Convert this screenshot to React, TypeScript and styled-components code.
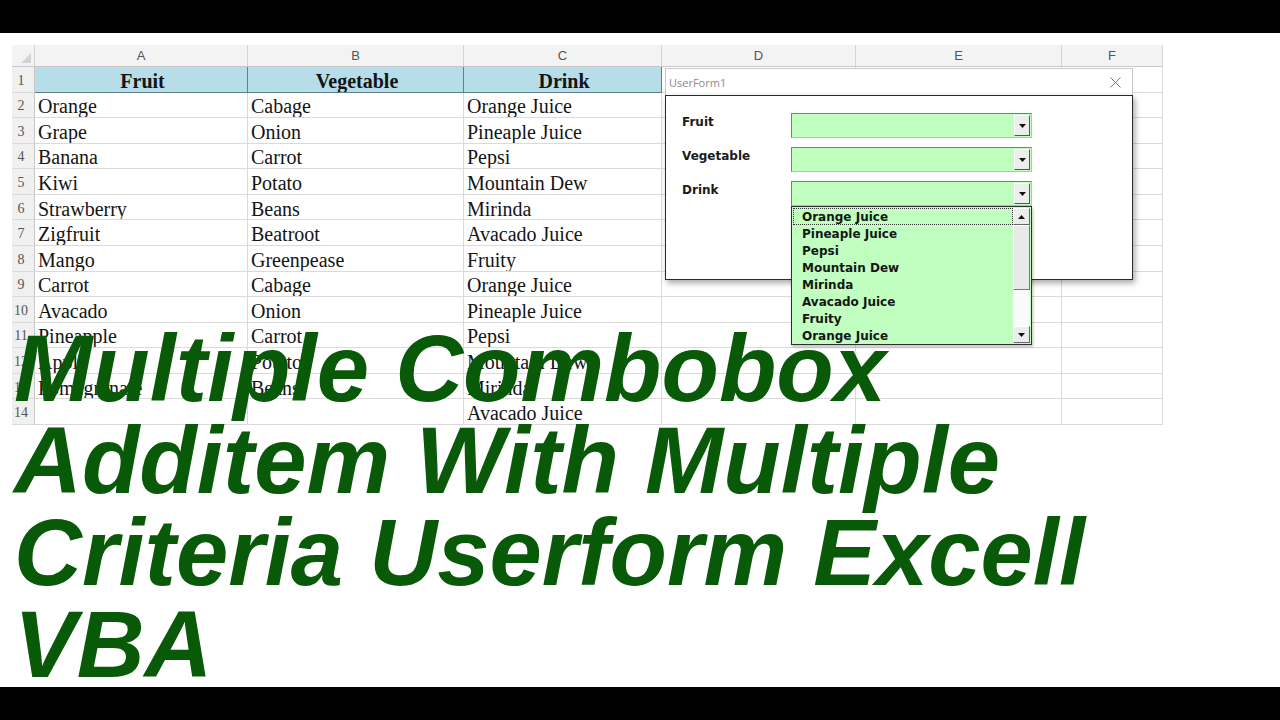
import React from 'react'
import styled, { createGlobalStyle } from 'styled-components'

const GlobalStyle = createGlobalStyle`
  html, body {
    margin: 0;
    padding: 0;
    background: #000;
  }
  body {
    width: 1280px;
    height: 720px;
    overflow: hidden;
  }
  * {
    box-sizing: border-box;
  }
`

const columns = [
  { label: 'A', width: 213 },
  { label: 'B', width: 216 },
  { label: 'C', width: 198 },
  { label: 'D', width: 194 },
  { label: 'E', width: 206 },
  { label: 'F', width: 101 },
]

const rows: string[][] = [
  ['Fruit', 'Vegetable', 'Drink'],
  ['Orange', 'Cabage', 'Orange Juice'],
  ['Grape', 'Onion', 'Pineaple Juice'],
  ['Banana', 'Carrot', 'Pepsi'],
  ['Kiwi', 'Potato', 'Mountain Dew'],
  ['Strawberry', 'Beans', 'Mirinda'],
  ['Zigfruit', 'Beatroot', 'Avacado Juice'],
  ['Mango', 'Greenpease', 'Fruity'],
  ['Carrot', 'Cabage', 'Orange Juice'],
  ['Avacado', 'Onion', 'Pineaple Juice'],
  ['Pineapple', 'Carrot', 'Pepsi'],
  ['Apple', 'Potato', 'Mountain Dew'],
  ['Pomegranate', 'Beans', 'Mirinda'],
  ['', '', 'Avacado Juice'],
]

const drinks = [
  'Orange Juice',
  'Pineaple Juice',
  'Pepsi',
  'Mountain Dew',
  'Mirinda',
  'Avacado Juice',
  'Fruity',
  'Orange Juice',
]

const fields = ['Fruit', 'Vegetable', 'Drink']

const Arrow = ({ up }: { up?: boolean }) => (
  <svg width="7" height="4" viewBox="0 0 7 4">
    <polygon points={up ? '0,4 7,4 3.5,0' : '0,0 7,0 3.5,4'} fill="#111" />
  </svg>
)

export default function App() {
  return (
    <>
      <GlobalStyle />
      <Page>
        <Letterbox />
        <Screen>
          <Sheet>
            <Corner />
            {columns.map((c) => (
              <ColHead key={c.label}>{c.label}</ColHead>
            ))}
            {rows.map((row, r) => (
              <React.Fragment key={r}>
                <RowHead>{r + 1}</RowHead>
                {columns.map((c, i) => (
                  <Cell key={c.label} $header={r === 0 && i < 3}>
                    {row[i] || ''}
                  </Cell>
                ))}
              </React.Fragment>
            ))}
          </Sheet>

          <Window>
            <TitleBar>
              <Caption>UserForm1</Caption>
              <svg width="11" height="11" viewBox="0 0 11 11">
                <path d="M0.5 0.5 L10.5 10.5 M10.5 0.5 L0.5 10.5" stroke="#7a7a7a" strokeWidth="1" />
              </svg>
            </TitleBar>
            <FormBody>
              {fields.map((f) => (
                <FieldRow key={f}>
                  <FieldLabel>{f}</FieldLabel>
                  <ComboWrap>
                    <Combo>
                      <ComboButton>
                        <Arrow />
                      </ComboButton>
                    </Combo>
                    {f === 'Drink' && (
                      <DropList>
                        <Items>
                          {drinks.map((d, i) => (
                            <Item key={i} $focused={i === 0}>
                              {d}
                            </Item>
                          ))}
                        </Items>
                        <ScrollBar>
                          <ScrollButton>
                            <Arrow up />
                          </ScrollButton>
                          <Thumb />
                          <Track />
                          <ScrollButton>
                            <Arrow />
                          </ScrollButton>
                        </ScrollBar>
                      </DropList>
                    )}
                  </ComboWrap>
                </FieldRow>
              ))}
            </FormBody>
          </Window>

          <Headline>
            <HeadLine>Multiple Combobox</HeadLine>
            <HeadLine>Additem With Multiple</HeadLine>
            <HeadLine>Criteria Userform Excell</HeadLine>
            <HeadLine>VBA</HeadLine>
          </Headline>
        </Screen>
        <Letterbox />
      </Page>
    </>
  )
}

const Page = styled.div`
  width: 1280px;
  height: 720px;
  display: flex;
  flex-direction: column;
  background: #000;
`

const Letterbox = styled.div`
  height: 33px;
  flex: none;
  background: #000;
`

const Screen = styled.div`
  position: relative;
  flex: 1;
  background: #fff;
  padding: 12px 0 0 12px;
  overflow: hidden;
`

const Sheet = styled.div`
  display: grid;
  grid-template-columns: 23px ${columns.map((c) => `${c.width}px`).join(' ')};
  grid-template-rows: 22px repeat(14, 25.57px);
  width: 1151px;
  background: #fff;
`

const Corner = styled.div`
  position: relative;
  background: #f3f3f3;
  border-right: 1px solid #d0d0d0;
  border-bottom: 1px solid #c8c8c8;

  &::after {
    content: '';
    position: absolute;
    right: 3px;
    bottom: 3px;
    border-left: 10px solid transparent;
    border-bottom: 10px solid #d2d2d2;
  }
`

const ColHead = styled.div`
  display: flex;
  align-items: center;
  justify-content: center;
  background: #f3f3f3;
  border-right: 1px solid #d4d4d4;
  border-bottom: 1px solid #c8c8c8;
  font-family: 'Liberation Sans', Arial, sans-serif;
  font-size: 13px;
  color: #555;
`

const RowHead = styled.div`
  display: flex;
  align-items: center;
  justify-content: center;
  padding: 3px 4px 0 0;
  background: #f0f0f0;
  border-right: 1px solid #c8c8c8;
  border-bottom: 1px solid #dadada;
  font-family: 'Liberation Serif', 'Times New Roman', serif;
  font-size: 14px;
  color: #555;
`

const Cell = styled.div<{ $header?: boolean }>`
  display: flex;
  align-items: center;
  justify-content: ${({ $header }) => ($header ? 'center' : 'flex-start')};
  padding: 4px 0 0 3px;
  overflow: hidden;
  white-space: nowrap;
  background: ${({ $header }) => ($header ? '#b7dee8' : '#fff')};
  border-right: 1px solid ${({ $header }) => ($header ? '#5f7f8c' : '#dadada')};
  border-bottom: 1px solid ${({ $header }) => ($header ? '#5f7f8c' : '#dadada')};
  font-family: 'Liberation Serif', 'Times New Roman', serif;
  font-size: 20px;
  font-weight: ${({ $header }) => ($header ? 700 : 400)};
  color: #141414;
`

const Window = styled.div`
  position: absolute;
  left: 665px;
  top: 35px;
  width: 468px;
  height: 212px;
  display: flex;
  flex-direction: column;
`

const TitleBar = styled.div`
  height: 27px;
  flex: none;
  display: flex;
  align-items: center;
  justify-content: space-between;
  padding: 0 11px 0 3px;
  background: #fff;
  border: 1px solid #c9c9c9;
  border-bottom: none;
`

const Caption = styled.span`
  font-family: 'Open Sans', 'Liberation Sans', sans-serif;
  font-size: 11px;
  color: #8a8a8a;
`

const FormBody = styled.div`
  flex: 1;
  display: flex;
  flex-direction: column;
  gap: 9px;
  padding: 17px 0 0 16px;
  background: #fff;
  border: 1px solid #2b2b2b;
  box-shadow: 2px 3px 6px rgba(0, 0, 0, 0.35);
`

const FieldRow = styled.div`
  display: grid;
  grid-template-columns: 109px 241px;
  align-items: start;
`

const FieldLabel = styled.div`
  padding-top: 2px;
  font-family: 'DejaVu Sans', Tahoma, sans-serif;
  font-size: 12px;
  line-height: 14px;
  font-weight: 700;
  color: #1a1a1a;
`

const ComboWrap = styled.div`
  position: relative;
`

const Combo = styled.div`
  height: 25px;
  display: flex;
  justify-content: flex-end;
  padding: 1px;
  background: #c0ffc0;
  border: 1px solid;
  border-color: #7c7c7c #bdbdbd #bdbdbd #7c7c7c;
`

const ComboButton = styled.div`
  width: 16px;
  display: flex;
  align-items: center;
  justify-content: center;
  background: #ededed;
  border: 1px solid;
  border-color: #fff #555 #555 #fff;
`

const DropList = styled.div`
  position: absolute;
  top: 100%;
  left: 0;
  width: 241px;
  height: 139px;
  display: flex;
  padding: 1px;
  background: #c0ffc0;
  border: 1px solid #2f2f2f;
  box-shadow: 1px 2px 3px rgba(0, 0, 0, 0.25);
  z-index: 2;
`

const Items = styled.div`
  flex: 1;
  display: flex;
  flex-direction: column;
`

const Item = styled.div<{ $focused?: boolean }>`
  height: 17px;
  padding: 1px 0 0 8px;
  border: 1px dotted ${({ $focused }) => ($focused ? '#333' : 'transparent')};
  font-family: 'DejaVu Sans', Tahoma, sans-serif;
  font-size: 12px;
  line-height: 14px;
  font-weight: 700;
  color: #151515;
  white-space: nowrap;
`

const ScrollBar = styled.div`
  width: 17px;
  display: flex;
  flex-direction: column;
  background: #fff;
`

const ScrollButton = styled.div`
  height: 17px;
  flex: none;
  display: flex;
  align-items: center;
  justify-content: center;
  background: #ececec;
  border: 1px solid;
  border-color: #fff #666 #666 #fff;
`

const Thumb = styled.div`
  height: 65px;
  flex: none;
  background: #e9e9e9;
  border: 1px solid;
  border-color: #fff #777 #777 #fff;
`

const Track = styled.div`
  flex: 1;
  background: #fafafa;
`

const Headline = styled.div`
  position: absolute;
  left: 14px;
  top: 290px;
  z-index: 3;
  font-family: 'Liberation Sans', Arial, sans-serif;
  font-size: 94px;
  line-height: 92px;
  font-weight: 700;
  font-style: italic;
  color: #085a08;
  white-space: nowrap;
`

const HeadLine = styled.div``
